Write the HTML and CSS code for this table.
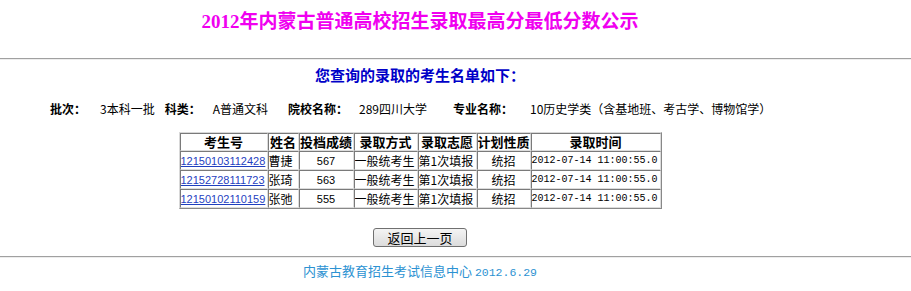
FILE: index.html
```html
<!DOCTYPE html>
<html lang="zh-CN">
<head>
<meta charset="utf-8">
<title>2012年内蒙古普通高校招生录取最高分最低分数公示</title>
<link rel="stylesheet" href="styles.css">
</head>
<body>
<div class="wrap">
  <h1 class="title"><span class="num">2012</span>年内蒙古普通高校招生录取最高分最低分数公示</h1>
</div>
<div class="rule"></div>
<div class="wrap">
  <h2 class="subtitle">您查询的录取的考生名单如下：</h2>
  <div class="info">
    <b class="lbl">批次：</b><span class="val v1">3本科一批</span>
    <b class="lbl l2">科类：</b><span class="val v2">A普通文科</span>
    <b class="lbl l3">院校名称：</b><span class="val v3">289四川大学</span>
    <b class="lbl l4">专业名称：</b><span class="val v4">10历史学类（含基地班、考古学、博物馆学）</span>
  </div>
  <table class="grid">
    <colgroup>
      <col class="c1"><col class="c2"><col class="c3"><col class="c4"><col class="c5"><col class="c6"><col class="c7">
    </colgroup>
    <thead>
      <tr><th>考生号</th><th>姓名</th><th>投档成绩</th><th>录取方式</th><th>录取志愿</th><th>计划性质</th><th>录取时间</th></tr>
    </thead>
    <tbody>
      <tr><td class="l"><a href="#">12150103112428</a></td><td class="l">曹捷</td><td class="n">567</td><td class="l">一般统考生</td><td class="l">第1次填报</td><td class="c">统招</td><td class="t">2012-07-14 11:00:55.0</td></tr>
      <tr><td class="l"><a href="#">12152728111723</a></td><td class="l">张琦</td><td class="n">563</td><td class="l">一般统考生</td><td class="l">第1次填报</td><td class="c">统招</td><td class="t">2012-07-14 11:00:55.0</td></tr>
      <tr><td class="l"><a href="#">12150102110159</a></td><td class="l">张弛</td><td class="n">555</td><td class="l">一般统考生</td><td class="l">第1次填报</td><td class="c">统招</td><td class="t">2012-07-14 11:00:55.0</td></tr>
    </tbody>
  </table>
  <div class="actions"><button class="back" type="button">返回上一页</button></div>
</div>
<div class="rule rule2"></div>
<div class="wrap">
  <p class="footer">内蒙古教育招生考试信息中心 <span class="fnum">2012.6.29</span></p>
</div>
</body>
</html>
```
FILE: styles.css
```css
html, body {
  margin: 0;
  padding: 0;
  background: #ffffff;
}
body {
  font-family: "Noto Sans CJK SC", "Liberation Sans", sans-serif;
  font-size: 12px;
  color: #000;
}
.wrap {
  width: 840px;
  text-align: center;
}
.title {
  margin: 0;
  padding-top: 9px;
  height: 49px;
  font-size: 19px;
  line-height: 22px;
  font-weight: bold;
  color: #f000f0;
  font-family: "Noto Sans CJK SC", sans-serif;
}
.title .num {
  font-family: "Liberation Serif", serif;
}
.rule {
  height: 0;
  border-top: 1px solid #a0a0a0;
  border-bottom: 1px solid #ededed;
}
.subtitle {
  margin: 0;
  padding-top: 6px;
  font-size: 15px;
  line-height: 18px;
  font-weight: bold;
  color: #0000c8;
}
.info {
  display: flex;
  align-items: center;
  padding-left: 50px;
  margin-top: 17px;
  line-height: 16px;
  white-space: nowrap;
  font-size: 12px;
}
.info .lbl {
  font-weight: bold;
}
.info .v1 { margin-left: 14px; }
.info .l2 { margin-left: 10px; }
.info .v2 { margin-left: 12px; }
.info .l3 { margin-left: 20px; }
.info .v3 { margin-left: 11px; }
.info .l4 { margin-left: 26px; }
.info .v4 { margin-left: 17px; }

.grid {
  margin: 15px auto 0;
  border-spacing: 0;
  table-layout: fixed;
  width: 483px;
  border-top: 1px solid #d8d8d8;
  border-left: 1px solid #d8d8d8;
  border-right: 1px solid #888;
  border-bottom: 1px solid #888;
}
.c1 { width: 88px; }
.c2 { width: 31px; }
.c3 { width: 55px; }
.c4 { width: 64px; }
.c5 { width: 59px; }
.c6 { width: 54px; }
.c7 { width: 130px; }
.grid th, .grid td {
  border-top: 1px solid #7a7a7a;
  border-left: 1px solid #7a7a7a;
  border-right: 1px solid #dcdcdc;
  border-bottom: 1px solid #dcdcdc;
  padding: 0;
  height: 16px;
  line-height: 16px;
  white-space: nowrap;
  overflow: hidden;
}
.grid th {
  font-size: 13px;
  font-weight: bold;
  text-align: center;
}
.grid td { font-size: 12px; }
.grid td.l { text-align: left; }
.grid td.c, .grid td.n { text-align: center; }
.grid td.n { font-family: "Liberation Sans", sans-serif; font-size: 11px; }
.grid td.t { text-align: left; font-family: "Liberation Mono", monospace; font-size: 10px; }
.grid a {
  color: #1f3fbf;
  text-decoration: underline;
  font-family: "Liberation Sans", sans-serif;
  font-size: 11px;
}
.actions {
  margin-top: 19px;
  height: 20px;
}
.back {
  width: 94px;
  height: 19px;
  padding: 0;
  font-family: "Noto Sans CJK SC", sans-serif;
  font-size: 13px;
  line-height: 15px;
  color: #000;
  border: 1px solid #707070;
  border-radius: 3px;
  background: linear-gradient(#f4f4f4, #dcdcdc);
}
.rule2 { margin-top: 8px; }
.footer {
  margin: 0;
  padding-top: 4px;
  font-size: 13px;
  line-height: 18px;
  color: #2c92d2;
}
.footer .fnum { font-family: "Liberation Mono", monospace; font-size: 11.5px; }
```
